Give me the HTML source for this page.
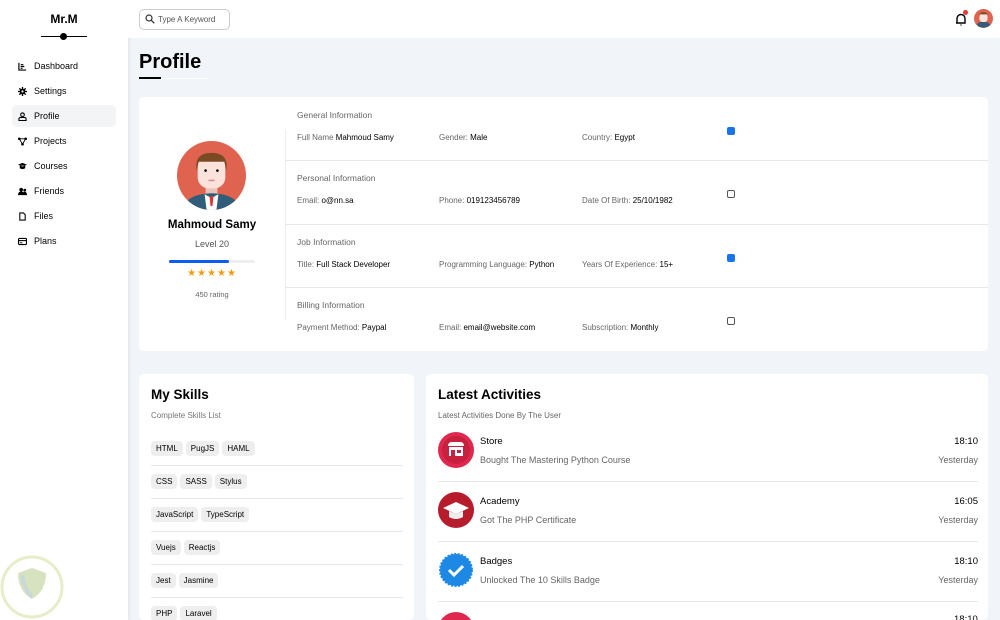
<!DOCTYPE html>
<html style="width:1000px;height:620px;overflow:hidden"><head><style>
*{box-sizing:border-box;margin:0;padding:0}
body{width:1000px;height:620px;overflow:hidden;background:#f1f4f8;font-family:"Liberation Sans",Arial,sans-serif;position:relative;color:#000}
.a{position:absolute}
.side{left:0;top:0;width:128px;height:620px;background:#fff;box-shadow:1px 0 4px rgba(0,0,0,.08)}
.nav{left:12px;width:104px;height:22px;font-size:9px;display:flex;align-items:center;padding-left:6px;border-radius:5px}
.nav svg{width:9px;height:9px;margin-right:7px}
.card{background:#fff;border-radius:5px}
.lbl{font-size:8px;color:#666}
.lbl b{color:#000;font-weight:normal}
.sec{font-size:8.5px;color:#666}
.chk{width:8px;height:8px;border:1px solid #555;border-radius:2px;background:#fff}
.chk.on{background:#1a73e8;border-color:#1a73e8}
.tag{display:inline-block;background:#eee;border-radius:4px;font-size:8px;padding:3px 5px;margin-right:3px}
.row{left:151px;width:252px;height:33px}
.row .tag{margin-top:9px}
.ln{height:1px;background:#e8e8e8}
.act .t{font-size:9.5px}
.act .s{font-size:9px;color:#666}
</style></head><body>
<div class="a side"></div>
<div class="a" style="left:0;top:12px;width:128px;text-align:center;font-weight:bold;font-size:12px">Mr.M</div>
<div class="a" style="left:41px;top:36px;width:46px;height:1px;background:#000"></div>
<div class="a" style="left:60px;top:33px;width:7px;height:7px;border-radius:50%;background:#000"></div>
<div class="a nav" style="top:55px"><svg viewBox="0 0 10 10"><path d="M1 1v8h8M3 3h3M3 5h4M3 7h2" stroke="#000" fill="none" stroke-width="1.3"/></svg>Dashboard</div>
<div class="a nav" style="top:80px"><svg viewBox="0 0 10 10"><circle cx="5" cy="5" r="3.2" fill="#000"/><path d="M5 0v10M0 5h10M1.5 1.5l7 7M8.5 1.5l-7 7" stroke="#000" stroke-width="1.5"/><circle cx="5" cy="5" r="1.2" fill="#fff"/></svg>Settings</div>
<div class="a nav" style="top:105px;background:#f3f4f6"><svg viewBox="0 0 10 10"><circle cx="5" cy="3" r="2" fill="none" stroke="#000" stroke-width="1.2"/><path d="M1 9.5v-1.5q0-2 2-2h4q2 0 2 2v1.5z" fill="none" stroke="#000" stroke-width="1.2"/></svg>Profile</div>
<div class="a nav" style="top:130px"><svg viewBox="0 0 10 10"><circle cx="1.5" cy="2" r="1.5"/><circle cx="8.5" cy="2" r="1.5"/><circle cx="5" cy="8" r="1.5"/><path d="M1.5 2h7L5 8z" stroke="#000" fill="none"/></svg>Projects</div>
<div class="a nav" style="top:155px"><svg viewBox="0 0 10 10"><path d="M0 3l5-2 5 2-5 2zM2 4v3q3 2 6 0v-3" fill="#000"/></svg>Courses</div>
<div class="a nav" style="top:180px"><svg viewBox="0 0 10 10"><circle cx="3.5" cy="3" r="2"/><circle cx="7.5" cy="3.5" r="1.6"/><path d="M0 9q0-4 3.5-4t3.5 4zM6 5.5q4-1 4 3.5h-3" fill="#000"/></svg>Friends</div>
<div class="a nav" style="top:205px"><svg viewBox="0 0 10 10"><path d="M2 1h4l2 2v6H2z" fill="none" stroke="#000" stroke-width="1.2"/></svg>Files</div>
<div class="a nav" style="top:230px"><svg viewBox="0 0 10 10"><rect x="0.6" y="1.6" width="8.8" height="6.8" rx="1" fill="none" stroke="#000" stroke-width="1.2"/><path d="M1 4h8" stroke="#000" stroke-width="1.2"/><path d="M2 6.5h3" stroke="#000"/></svg>Plans</div>

<div class="a" style="left:128px;top:0;width:872px;height:38px;background:#fff"></div>
<div class="a" style="left:139px;top:9px;width:91px;height:21px;border:1px solid #ccc;border-radius:5px;font-size:8px;color:#555;padding:5px 0 0 18px">Type A Keyword</div>
<svg class="a" style="left:145px;top:14px" width="10" height="10" viewBox="0 0 10 10"><circle cx="4" cy="4" r="3" fill="none" stroke="#333" stroke-width="1.2"/><path d="M6.3 6.3l3 3" stroke="#333" stroke-width="1.3"/></svg>
<svg class="a" style="left:955px;top:12px" width="12" height="14" viewBox="0 0 12 14"><path d="M2 11V6.5a4 4 0 0 1 8 0V11H1M6 12.5v1" fill="none" stroke="#000" stroke-width="1.4"/></svg>
<div class="a" style="left:963px;top:10px;width:5px;height:5px;border-radius:50%;background:#e53935"></div>
<svg class="a" style="left:974px;top:9px" width="19" height="19" viewBox="0 0 70 70"><circle cx="35" cy="35" r="35" fill="#e0634f"/><path d="M10 58q5-10 25-12 20 2 25 12a35 35 0 0 1-50 0z" fill="#2f5d7a"/><rect x="20" y="14" width="30" height="34" rx="12" fill="#fbe3dc"/><path d="M19 28q-2-16 16-16 18 0 16 16l-3-8H22z" fill="#7a4a22"/></svg>

<div class="a" style="left:139px;top:51px;font-size:20px;font-weight:bold">Profile</div>
<div class="a" style="left:139px;top:78px;width:68px;height:1px;background:#fff"></div>
<div class="a" style="left:139px;top:77px;width:22px;height:2px;background:#000"></div>

<div class="a card" style="left:139px;top:97px;width:849px;height:254px"></div>
<svg class="a" style="left:177px;top:141px" width="69" height="69" viewBox="0 0 70 70"><circle cx="35" cy="35" r="35" fill="#e0634f"/><clipPath id="c"><circle cx="35" cy="35" r="35"/></clipPath><g clip-path="url(#c)"><rect x="29" y="44" width="12" height="10" fill="#e8c4b8"/><path d="M6 70q2-16 29-17 27 1 29 17z" fill="#2f5d7a"/><path d="M28 54l7 4 7-4-2 16H30z" fill="#fff"/><path d="M33 56h4l-1 10h-2z" fill="#d33"/><rect x="21" y="14" width="28" height="34" rx="11" fill="#fbe3dc"/><path d="M20 30q-3-18 15-18t15 18l-2-9H22z" fill="#7a4a22"/><circle cx="29" cy="30" r="1.3"/><circle cx="41" cy="30" r="1.3"/><path d="M32 40h6" stroke="#c88" stroke-width="1.5"/></g></svg>
<div class="a" style="left:139px;top:219px;width:146px;text-align:center;font-size:11.5px;font-weight:bold">Mahmoud Samy</div>
<div class="a" style="left:139px;top:239px;width:146px;text-align:center;font-size:9px;color:#555">Level 20</div>
<div class="a" style="left:169px;top:260px;width:86px;height:3px;background:#eee;border-radius:2px"></div>
<div class="a" style="left:169px;top:260px;width:60px;height:3px;background:#0b5cf0;border-radius:2px"></div>
<div class="a" style="left:139px;top:268px;width:146px;text-align:center;font-size:10px;color:#f39c12;letter-spacing:1px">★★★★★</div>
<div class="a" style="left:139px;top:290px;width:146px;text-align:center;font-size:7.5px;color:#666">450 rating</div>
<div class="a" style="left:285px;top:130px;width:1px;height:190px;background:#eee"></div>

<div class="a sec" style="left:297px;top:110px">General Information</div>
<div class="a lbl" style="left:297px;top:133px">Full Name <b>Mahmoud Samy</b></div>
<div class="a lbl" style="left:439px;top:133px">Gender: <b>Male</b></div>
<div class="a lbl" style="left:582px;top:133px">Country: <b>Egypt</b></div>
<div class="a chk on" style="left:727px;top:127px"></div>
<div class="a ln" style="left:285px;top:160px;width:703px"></div>

<div class="a sec" style="left:297px;top:173px">Personal Information</div>
<div class="a lbl" style="left:297px;top:196px">Email: <b>o@nn.sa</b></div>
<div class="a lbl" style="left:439px;top:196px">Phone: <b>019123456789</b></div>
<div class="a lbl" style="left:582px;top:196px">Date Of Birth: <b>25/10/1982</b></div>
<div class="a chk" style="left:727px;top:190px"></div>
<div class="a ln" style="left:285px;top:224px;width:703px"></div>

<div class="a sec" style="left:297px;top:237px">Job Information</div>
<div class="a lbl" style="left:297px;top:260px">Title: <b>Full Stack Developer</b></div>
<div class="a lbl" style="left:439px;top:260px">Programming Language: <b>Python</b></div>
<div class="a lbl" style="left:582px;top:260px">Years Of Experience: <b>15+</b></div>
<div class="a chk on" style="left:727px;top:254px"></div>
<div class="a ln" style="left:285px;top:287px;width:703px"></div>

<div class="a sec" style="left:297px;top:300px">Billing Information</div>
<div class="a lbl" style="left:297px;top:323px">Payment Method: <b>Paypal</b></div>
<div class="a lbl" style="left:439px;top:323px">Email: <b>email@website.com</b></div>
<div class="a lbl" style="left:582px;top:323px">Subscription: <b>Monthly</b></div>
<div class="a chk" style="left:727px;top:317px"></div>

<div class="a card" style="left:139px;top:374px;width:275px;height:246px"></div>
<div class="a" style="left:151px;top:387px;font-size:13.5px;font-weight:bold">My Skills</div>
<div class="a" style="left:151px;top:411px;font-size:8px;color:#777">Complete Skills List</div>
<div class="a row" style="top:432px"><span class="tag">HTML</span><span class="tag">PugJS</span><span class="tag">HAML</span></div>
<div class="a ln" style="left:151px;top:465px;width:252px"></div>
<div class="a row" style="top:465px"><span class="tag">CSS</span><span class="tag">SASS</span><span class="tag">Stylus</span></div>
<div class="a ln" style="left:151px;top:498px;width:252px"></div>
<div class="a row" style="top:498px"><span class="tag">JavaScript</span><span class="tag">TypeScript</span></div>
<div class="a ln" style="left:151px;top:531px;width:252px"></div>
<div class="a row" style="top:531px"><span class="tag">Vuejs</span><span class="tag">Reactjs</span></div>
<div class="a ln" style="left:151px;top:564px;width:252px"></div>
<div class="a row" style="top:564px"><span class="tag">Jest</span><span class="tag">Jasmine</span></div>
<div class="a ln" style="left:151px;top:597px;width:252px"></div>
<div class="a row" style="top:597px;height:23px;overflow:hidden"><span class="tag">PHP</span><span class="tag">Laravel</span></div>

<div class="a card" style="left:426px;top:374px;width:562px;height:246px;overflow:hidden">
<div class="a" style="left:12px;top:13px;font-size:13.5px;font-weight:bold">Latest Activities</div>
<div class="a" style="left:12px;top:37px;font-size:8px;color:#666">Latest Activities Done By The User</div>

<div class="a act" style="left:12px;top:58px;width:540px;height:60px">
<svg class="a" style="left:0;top:0" width="36" height="36" viewBox="0 0 36 36"><circle cx="18" cy="18" r="18" fill="#e0284f"/><circle cx="18" cy="18" r="14" fill="#c8203f"/><path d="M10 14q0-4 4-4h8q4 0 4 4zM11 15h14v9H11z" fill="#fff"/><rect x="13" y="18" width="4" height="6" fill="#c8203f"/><rect x="19" y="18" width="4" height="3" fill="#c8203f"/></svg>
<div class="a t" style="left:42px;top:4px">Store</div><div class="a s" style="left:42px;top:23px">Bought The Mastering Python Course</div>
<div class="a t" style="right:0;top:4px">18:10</div><div class="a s" style="right:0;top:23px">Yesterday</div></div>
<div class="a ln" style="left:12px;top:107px;width:540px"></div>
<div class="a act" style="left:12px;top:118px;width:540px;height:60px">
<svg class="a" style="left:0;top:0" width="36" height="36" viewBox="0 0 36 36"><circle cx="18" cy="18" r="18" fill="#b71c2c"/><path d="M5 16l13-6 13 6-13 6z" fill="#fff"/><path d="M11 19v6q7 4 14 0v-6l-7 3z" fill="#eee"/></svg>
<div class="a t" style="left:42px;top:4px">Academy</div><div class="a s" style="left:42px;top:23px">Got The PHP Certificate</div>
<div class="a t" style="right:0;top:4px">16:05</div><div class="a s" style="right:0;top:23px">Yesterday</div></div>
<div class="a ln" style="left:12px;top:167px;width:540px"></div>
<div class="a act" style="left:12px;top:178px;width:540px;height:60px">
<svg class="a" style="left:0;top:0" width="36" height="36" viewBox="0 0 36 36"><circle cx="18" cy="18" r="16" fill="#1e88e5" stroke="#1e88e5" stroke-width="2" stroke-dasharray="2 1.5"/><path d="M11 18l5 5 9-9" fill="none" stroke="#fff" stroke-width="3"/></svg>
<div class="a t" style="left:42px;top:4px">Badges</div><div class="a s" style="left:42px;top:23px">Unlocked The 10 Skills Badge</div>
<div class="a t" style="right:0;top:4px">18:10</div><div class="a s" style="right:0;top:23px">Yesterday</div></div>
<div class="a ln" style="left:12px;top:227px;width:540px"></div>
<div class="a" style="left:12px;top:238px;width:36px;height:36px;border-radius:50%;background:#e0284f"></div>
<div class="a" style="left:528px;top:240px;font-size:9.5px">18:10</div>
</div>

<svg class="a" style="left:0;top:555px;opacity:.45" width="65" height="65" viewBox="0 0 65 65"><circle cx="32" cy="32" r="30" fill="none" stroke="#c9d98a" stroke-width="3"/><path d="M18 18l14-5 14 5q0 18-14 26-14-8-14-26z" fill="#a8c070"/><path d="M22 20q2 14 10 22" stroke="#8aa" stroke-width="4" fill="none"/></svg>
</body></html>
